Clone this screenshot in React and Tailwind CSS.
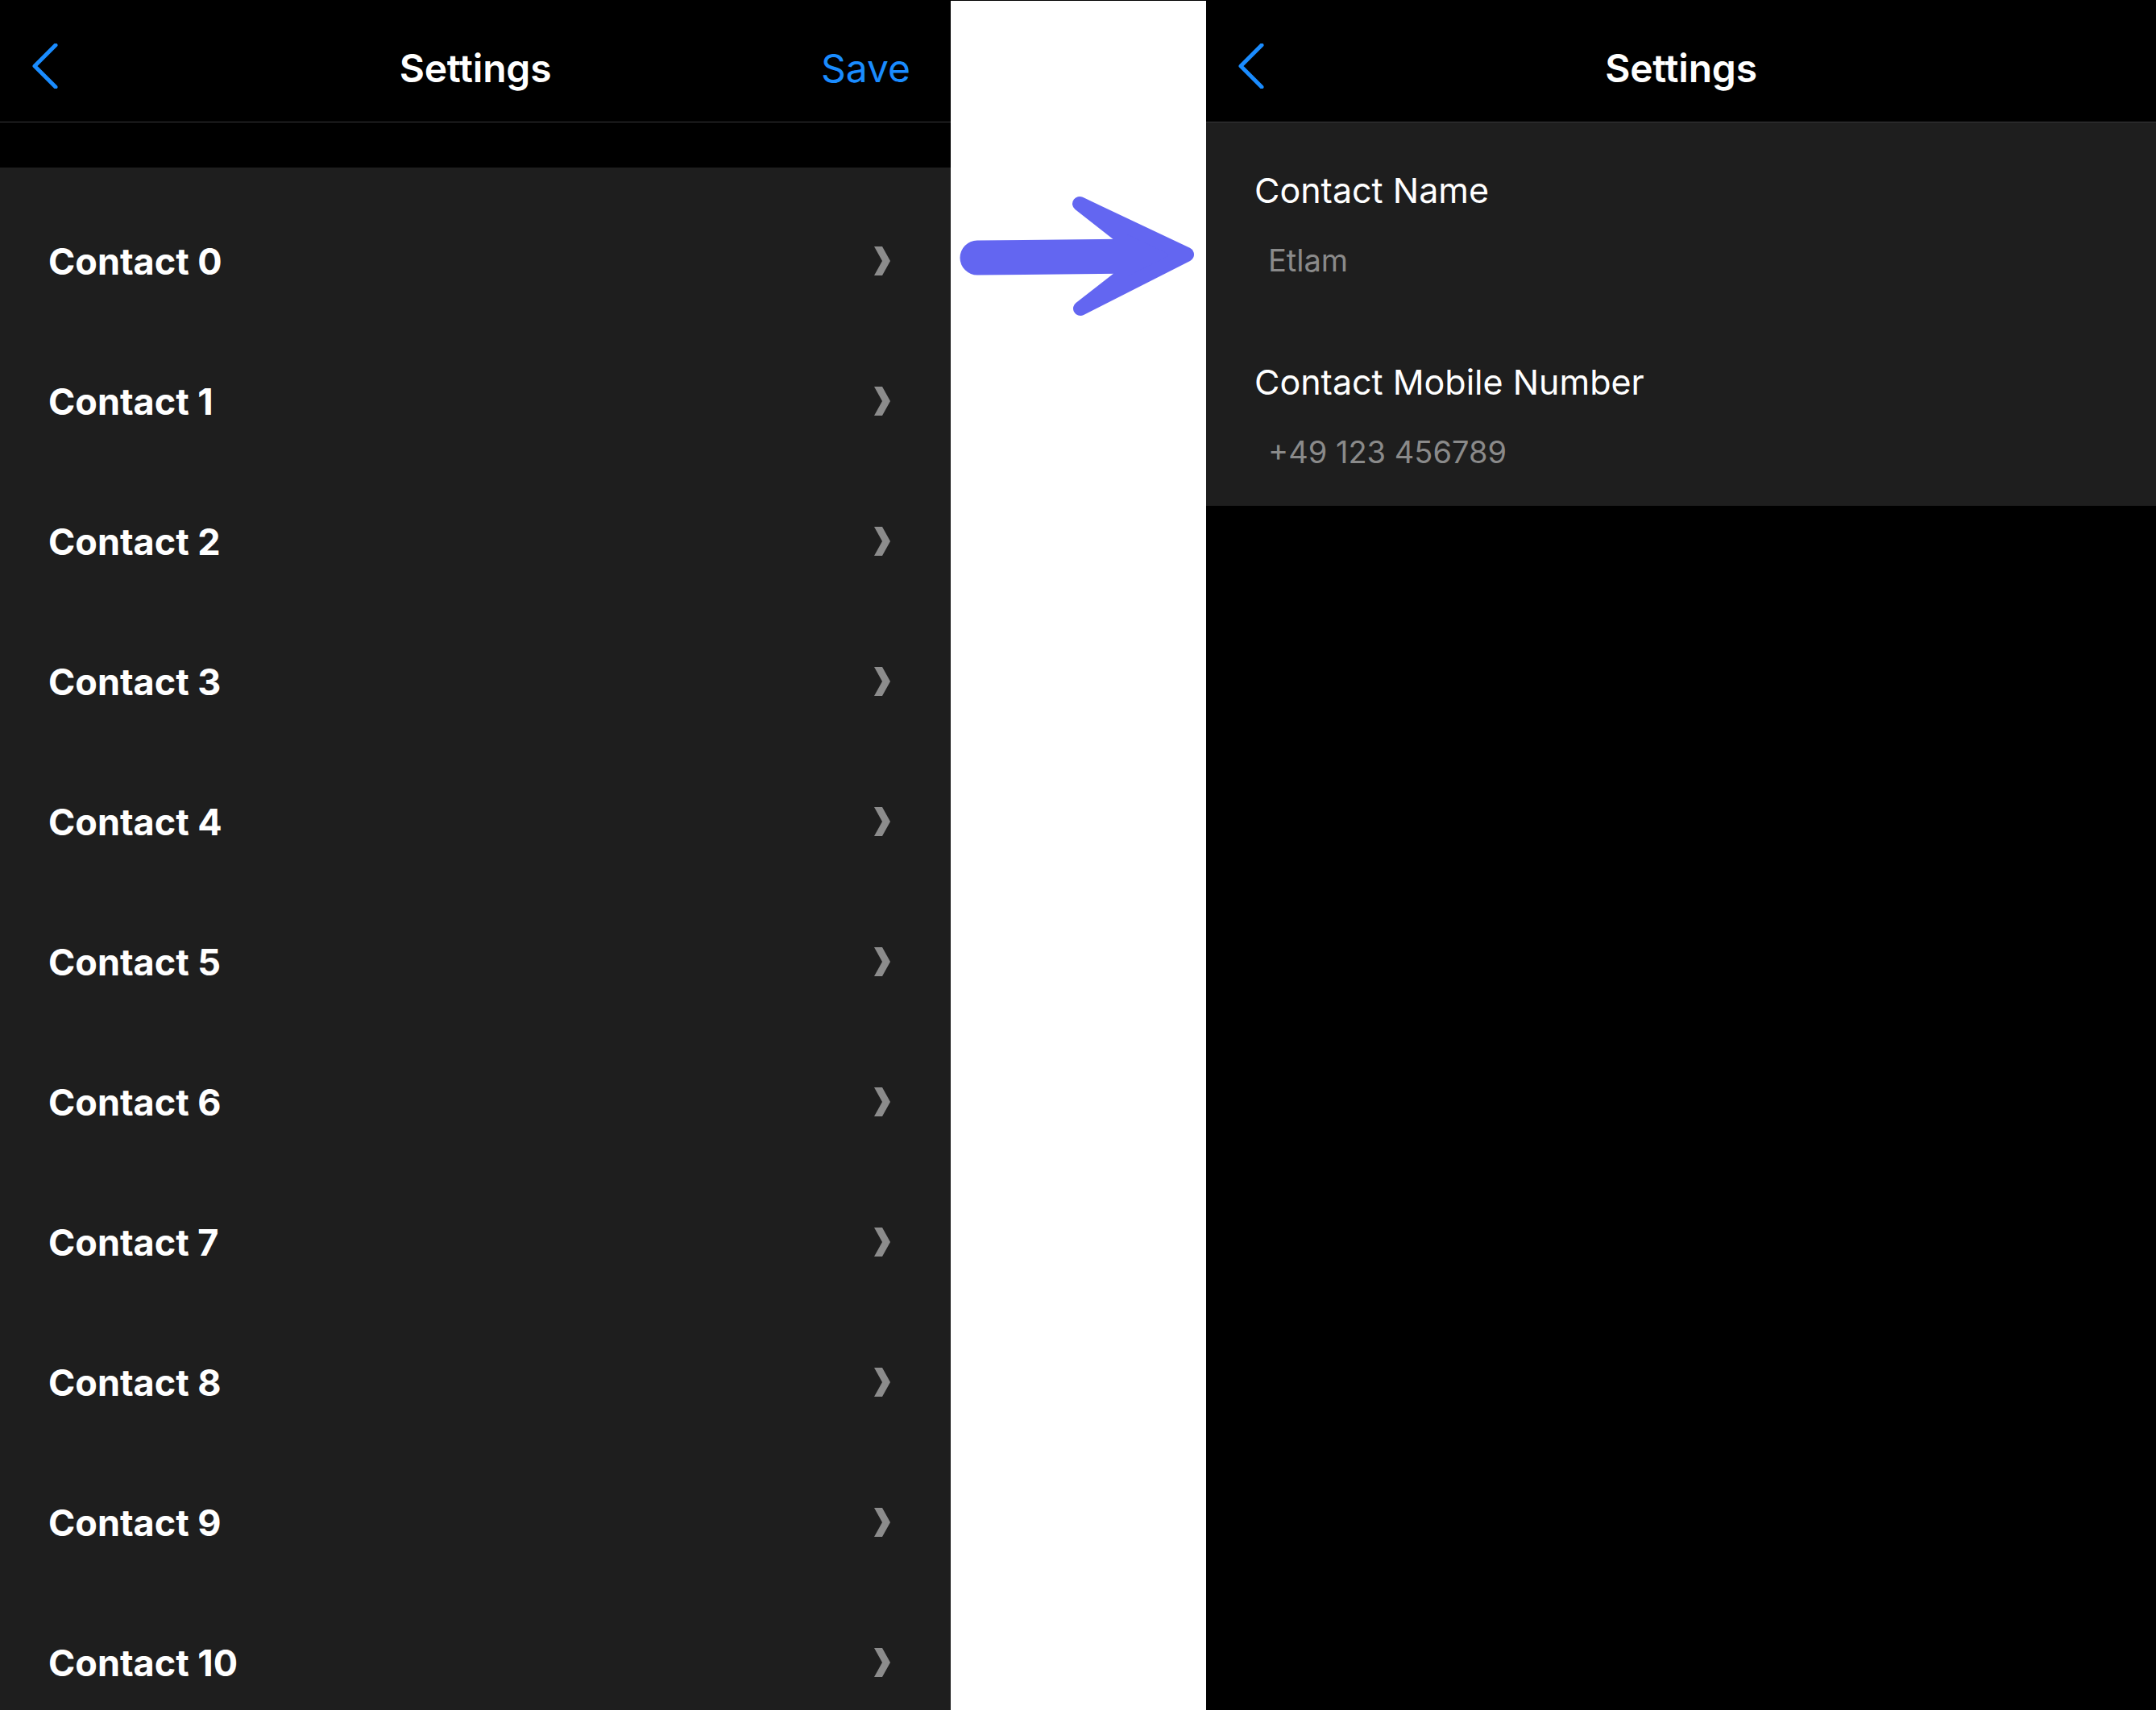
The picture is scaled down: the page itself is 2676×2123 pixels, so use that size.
import React from "react";

const contacts = Array.from({ length: 11 }, (_, i) => `Contact ${i}`);

const BackChevron = () => (
  <svg width="32" height="56" viewBox="0 0 32 56" fill="none" className="block">
    <polyline
      points="29,2 3,28 29,54"
      stroke="#1a8cff"
      strokeWidth="5"
      strokeLinecap="round"
      strokeLinejoin="round"
    />
  </svg>
);

const RowChevron = () => (
  <svg width="20" height="36" viewBox="0 0 20 36" className="block">
    <polygon points="0,0 10,0 20,18 10,36 0,36 10,18" fill="#8c8c8c" />
  </svg>
);

const NavBar = ({ showSave }) => (
  <div className="h-[152px] shrink-0 grid grid-cols-[1fr_auto_1fr] items-center pt-[18px] border-b border-[#38383a]">
    <div className="pl-[40px] -mt-[6px]">
      <BackChevron />
    </div>
    <h1 className="text-[48px] font-semibold text-white leading-none tracking-[-0.2px]">
      Settings
    </h1>
    <div className="flex justify-end pr-[50px]">
      {showSave && (
        <span className="text-[48px] leading-none text-[#1a8cff]">Save</span>
      )}
    </div>
  </div>
);

const ContactList = () => (
  <div className="w-[1180px] shrink-0 flex flex-col bg-black overflow-hidden">
    <NavBar showSave />
    <div className="h-[56px] shrink-0 bg-black" />
    <div className="flex-1 bg-[#1e1e1e] pt-[29px]">
      {contacts.map((name) => (
        <div
          key={name}
          className="h-[174px] flex items-center justify-between pl-[60px] pr-[75px]"
        >
          <span className="text-[45px] font-bold text-white leading-none">
            {name}
          </span>
          <RowChevron />
        </div>
      ))}
    </div>
  </div>
);

const Arrow = () => (
  <svg width="317" height="420" viewBox="0 0 317 420" className="block">
    <line
      x1="33"
      y1="319"
      x2="232"
      y2="317"
      stroke="#6366f1"
      strokeWidth="43"
      strokeLinecap="round"
    />
    <polygon
      points="160,252 293,315 161,382 211,343 211,292"
      fill="#6366f1"
      stroke="#6366f1"
      strokeWidth="18"
      strokeLinejoin="round"
    />
  </svg>
);

const Field = ({ label, value }) => (
  <div className="flex flex-col gap-[38px]">
    <span className="text-[43px] leading-[52px] text-white pl-[60px]">
      {label}
    </span>
    <span className="text-[38px] leading-[46px] text-[#8a8a8a] pl-[77px]">
      {value}
    </span>
  </div>
);

const ContactDetail = () => (
  <div className="flex-1 flex flex-col bg-black">
    <NavBar />
    <div className="bg-[#1e1e1e] pt-[58px] pb-[44px] flex flex-col gap-[102px]">
      <Field label="Contact Name" value="Etlam" />
      <Field label="Contact Mobile Number" value="+49 123 456789" />
    </div>
  </div>
);

export default function App() {
  return (
    <div
      className="w-[2676px] h-[2123px] flex overflow-hidden bg-black"
      style={{ fontFamily: "Inter, 'Noto Sans', sans-serif" }}
    >
      <ContactList />
      <div className="w-[317px] shrink-0 bg-white border-t border-black">
        <Arrow />
      </div>
      <ContactDetail />
    </div>
  );
}
